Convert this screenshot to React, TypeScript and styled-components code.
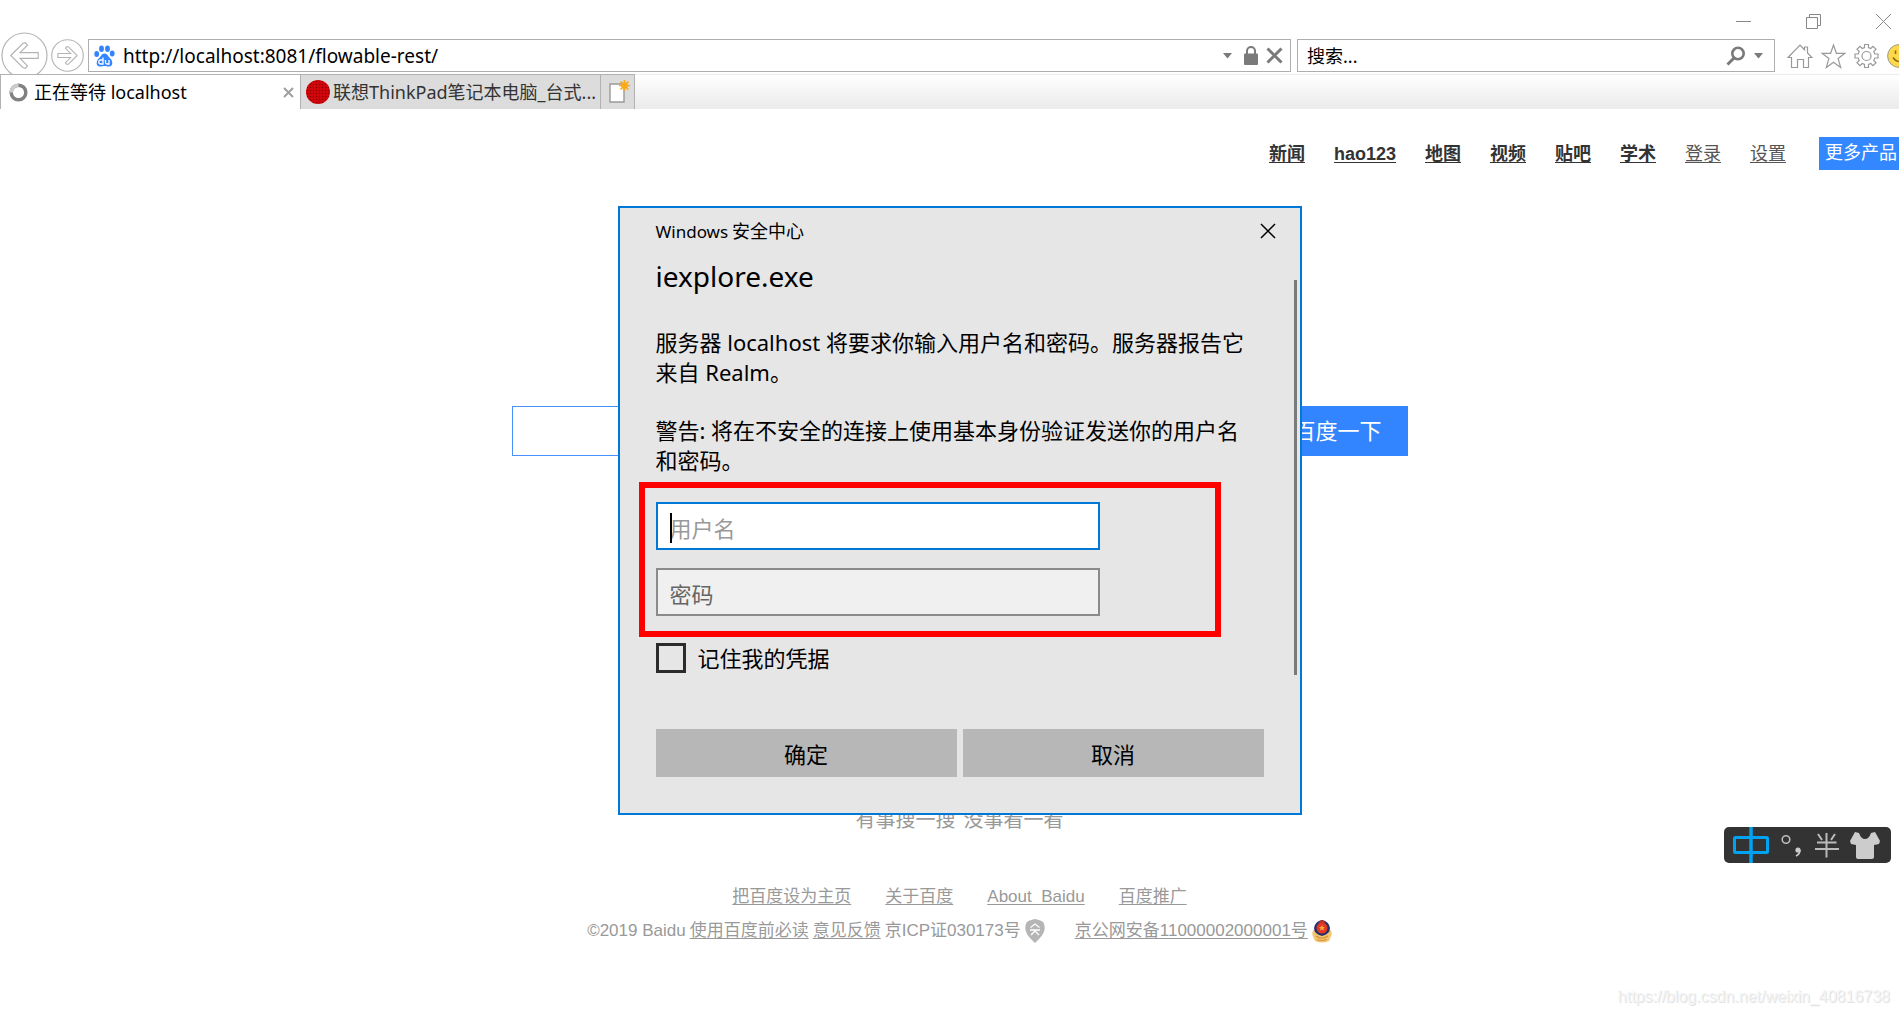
import React from "react";
import styled, { createGlobalStyle, css } from "styled-components";

const ui = `"Noto Sans", "Noto Sans CJK SC", sans-serif`;
const web = `"Liberation Sans", "Noto Sans CJK SC", sans-serif`;

const GlobalStyle = createGlobalStyle`
  *, *::before, *::after { box-sizing: border-box; }
  html, body { margin: 0; height: 100%; overflow: hidden; background: #fff; }
  #root { height: 100%; }
  button, input { font: inherit; color: inherit; margin: 0; }
  svg { display: block; flex: none; }
`;

const Screen = styled.div`
  position: relative;
  display: flex;
  flex-direction: column;
  min-height: 100vh;
  overflow: hidden;
  font-family: ${ui};
  color: #000;
`;

/* ---------- Browser chrome ---------- */

const Plain = styled.button`
  display: flex;
  align-items: center;
  justify-content: center;
  flex: none;
  padding: 0;
  border: 0;
  background: none;
`;

const TitleBar = styled.div`
  display: flex;
  justify-content: flex-end;
  gap: 53px;
  height: 32px;
  padding: 13px 7px 0 0;
  align-items: flex-start;
`;

const NavBar = styled.div`
  display: flex;
  align-items: center;
  height: 42px;
  padding-left: 1px;
  overflow: hidden;
`;

const BackForward = styled.div`
  display: flex;
  align-items: flex-start;
  gap: 3px;
  width: 87px;
  flex: none;
  height: 42px;
`;

const ForwardButton = styled(Plain)`
  margin-top: 7px;
`;

const Box = styled.div`
  display: flex;
  align-items: center;
  height: 33px;
  border: 1px solid #aeaeae;
  background: #fff;
  margin-top: 5px;
`;

const AddressBox = styled(Box)`
  flex: 1;
  padding: 0 7px 0 5px;
  gap: 8px;
  margin-right: 6px;
`;

const SearchBox = styled(Box)`
  width: 478px;
  padding: 0 11px 0 9px;
  gap: 8px;
`;

const AddressIcons = styled.div`
  display: flex;
  align-items: center;
  gap: 8px;
`;

const LockIcon = styled.svg`
  margin-left: 4px;
`;

const BarInput = styled.input<{ $size: number }>`
  flex: 1;
  min-width: 0;
  padding: 0;
  border: 0;
  outline: 0;
  background: none;
  font-size: ${(p) => p.$size}px;
  line-height: 28px;
  &::placeholder { color: #000; opacity: 1; }
`;

const Tools = styled.div`
  display: flex;
  gap: 8px;
  width: 124px;
  flex: none;
  padding-left: 12px;
  margin-top: 5px;
  overflow: hidden;
`;

const TabStrip = styled.div`
  display: flex;
  height: 35px;
  border-top: 1px solid transparent;
  background: linear-gradient(#ffffff, #ececec 90%);
`;

const Tab = styled.div<{ $active?: boolean }>`
  display: flex;
  align-items: center;
  gap: 6px;
  width: 300px;
  height: 35px;
  margin-top: -1px;
  padding: 0 6px 0 8px;
  border: 1px solid #b2b2b2;
  border-width: 1px 0 0 1px;
  background: #fff;
  font-size: 18px;
  line-height: 26px;
  white-space: nowrap;
  ${(p) =>
    !p.$active &&
    css`
      gap: 3px;
      padding: 0 0 0 5px;
      background: #dcdcdc;
      color: #333;
    `}
`;

const TabLabel = styled.span`
  flex: 1;
`;

const NewTab = styled(Plain)`
  width: 35px;
  height: 35px;
  margin-top: -1px;
  padding-left: 3px;
  border: 1px solid #b2b2b2;
  border-bottom: 0;
  background: #dcdcdc;
`;

/* ---------- Search page ---------- */

const Page = styled.main`
  display: flex;
  flex-direction: column;
  align-items: center;
  width: calc(100% + 20px);
  font-family: ${web};
`;

const TopNav = styled.nav`
  display: flex;
  align-items: center;
  align-self: flex-end;
  gap: 29px;
  height: 33px;
  margin: 28px 15px 0 0;
  font-size: 18px;
  line-height: 26px;
`;

const NavLink = styled.a<{ $bold?: boolean }>`
  color: ${(p) => (p.$bold ? "#333" : "#555")};
  font-weight: ${(p) => (p.$bold ? 700 : 400)};
  text-underline-offset: 2px;
`;

const MoreLink = styled.a`
  width: 85px;
  height: 33px;
  margin-left: 4px;
  padding-left: 6px;
  background: #3388ff;
  color: #fff;
  line-height: 32px;
  text-decoration: none;
  white-space: nowrap;
`;

const SearchForm = styled.form`
  display: flex;
  width: 896px;
  height: 50px;
  margin-top: 236px;
`;

const QueryInput = styled.input`
  flex: 1;
  min-width: 0;
  padding: 0 10px;
  border: 1px solid #4791ff;
  outline: 0;
`;

const QueryButton = styled.button`
  width: 140px;
  padding: 0 0 4px;
  border: 0;
  background: #3385ff;
  color: #fff;
  font-size: 22px;
`;

const Slogan = styled.p`
  display: flex;
  gap: 8px;
  margin: 350px 0 0;
  color: #999;
  font-size: 20px;
  line-height: 28px;
`;

const FooterLinks = styled.div`
  display: flex;
  gap: 34px;
  margin-top: 50px;
  font-size: 17px;
  line-height: 26px;
`;

const FooterLink = styled.a`
  color: #999;
  text-underline-offset: 2px;
`;

const Legal = styled.div`
  display: flex;
  align-items: center;
  gap: 4px;
  margin-top: 8px;
  color: #999;
  font-size: 17px;
  line-height: 26px;
`;

const Spacer = styled.span`
  width: 22px;
`;

/* ---------- Credentials dialog ---------- */

const DialogLayer = styled.div`
  position: absolute;
  top: 206px;
  left: 20px;
  right: 0;
  display: flex;
  justify-content: center;
  pointer-events: none;
`;

const Dialog = styled.section`
  position: relative;
  width: 684px;
  padding: 8px 36px 36px;
  border: 2px solid #0078d7;
  background: #e6e6e6;
  pointer-events: auto;
`;

const DialogBar = styled.header`
  display: flex;
  align-items: center;
  justify-content: space-between;
  height: 30px;
  margin-right: -12px;
`;

const Caption = styled.div`
  display: flex;
  align-items: baseline;
  gap: 4px;
  font-size: 18px;
  line-height: 26px;
`;

const AppName = styled.span`
  font-size: 17px;
`;

const DialogTitle = styled.h1`
  margin: 10px 0 0;
  padding-bottom: 3px;
  font-size: 28px;
  font-weight: 400;
  line-height: 40px;
`;

const Message = styled.p`
  margin: 28px 0 0;
  padding-right: 8px;
  font-size: 22px;
  line-height: 30px;
`;

const Fields = styled.div`
  position: relative;
  display: flex;
  flex-direction: column;
  align-items: flex-start;
  gap: 18px;
  margin-top: 27px;
`;

const Highlight = styled.div`
  position: absolute;
  inset: -20px 43px -21px -17px;
  border: 6px solid #f00;
  pointer-events: none;
`;

const FieldWrap = styled.label`
  position: relative;
  width: 444px;
`;

const Caret = styled.span`
  position: absolute;
  left: 14px;
  top: 11px;
  width: 2px;
  height: 30px;
  background: #000;
`;

const Field = styled.input<{ $focused?: boolean }>`
  display: block;
  width: 100%;
  height: 48px;
  padding: 4px 12px 0;
  border: 2px solid ${(p) => (p.$focused ? "#0078d7" : "#8a8a8a")};
  border-radius: 0;
  outline: 0;
  background: ${(p) => (p.$focused ? "#fff" : "#f0f0f0")};
  font-size: 22px;
  &::placeholder { color: ${(p) => (p.$focused ? "#999" : "#666")}; opacity: 1; }
`;

const Remember = styled.label`
  display: flex;
  align-items: center;
  gap: 12px;
  margin-top: 27px;
  font-size: 22px;
  line-height: 30px;
`;

const CheckBox = styled.input`
  appearance: none;
  width: 30px;
  height: 30px;
  border: 3px solid #2b2b2b;
`;

const Actions = styled.div`
  display: flex;
  gap: 6px;
  margin-top: 56px;
`;

const Action = styled.button`
  flex: 1;
  height: 48px;
  padding: 0;
  border: 0;
  background: #b7b7b7;
  font-size: 22px;
`;

const ScrollThumb = styled.div`
  position: absolute;
  top: 72px;
  right: 3px;
  width: 3px;
  height: 395px;
  background: #7a7a7a;
`;

/* ---------- Floating items ---------- */

const ImeBar = styled.div`
  position: absolute;
  right: 8px;
  top: 827px;
  display: flex;
  width: 167px;
  height: 36px;
  border-radius: 5px;
  background: #333;
  overflow: hidden;
`;

const Watermark = styled.div`
  position: absolute;
  right: 9px;
  bottom: 7px;
  color: #f4f4f4;
  font-family: ${web};
  font-size: 16px;
  line-height: 22px;
  text-shadow: 1px 1px 0 #e2e2e2;
`;

/* ---------- Icons ---------- */

const Arrow = ({ size, flip }: { size: number; flip?: boolean }) => (
  <svg width={size} height={size} viewBox="0 0 48 48" fill="none" stroke="#b4b4b4" strokeWidth={flip ? 1.6 : 1.2}>
    <circle cx="24" cy="24" r="23" />
    <path
      transform={flip ? "rotate(180 24 24)" : undefined}
      d="M10 24 22.500 11.500 25 11 27 13.500 19.500 21H38v6H19.500L27 34.500 25 37 22.500 36.500Z"
    />
  </svg>
);

const Paw = () => (
  <svg width="21" height="22" viewBox="0 0 21 22" fill="#3385ff">
    <ellipse cx="2.700" cy="9" rx="2.400" ry="3" />
    <ellipse cx="7.500" cy="3.700" rx="2.400" ry="3.200" />
    <ellipse cx="13.500" cy="3.700" rx="2.400" ry="3.200" />
    <ellipse cx="18.200" cy="8.500" rx="2.400" ry="3" />
    <path d="M10.500 8.500c3 0 3.500 3 5.500 4.700 3 2.500 3.500 8-1 8.300-2 .1-2.500-.5-4.500-.5s-2.500.6-4.500.5c-4.500-.3-4-5.800-1-8.300 2-1.700 2.500-4.700 5.500-4.700Z" />
    <path d="M9 12.500v6.500H6.800a1.900 1.900 0 0 1 0-4H9M11.500 15v2.500q0 1.500 1.500 1.500h2v-4" fill="none" stroke="#fff" strokeWidth="1.300" />
  </svg>
);

const Down = () => (
  <svg width="9" height="6" viewBox="0 0 9 6"><path d="M0 0h9L4.500 5.500Z" fill="#7a7a7a" /></svg>
);

export default function App() {
  return (
    <Screen>
      <GlobalStyle />
      <TitleBar>
        <Plain aria-label="Minimize">
          <svg width="17" height="17" viewBox="0 0 17 17" stroke="#888"><path d="M1 8.500h15" /></svg>
        </Plain>
        <Plain aria-label="Restore">
          <svg width="17" height="17" viewBox="0 0 17 17" fill="none" stroke="#888">
            <path d="M1.500 4.500h11v11h-11ZM4.500 4.500v-3h11v11h-3" />
          </svg>
        </Plain>
        <Plain aria-label="Close">
          <svg width="17" height="17" viewBox="0 0 17 17" stroke="#888"><path d="m1 1 15 15M16 1 1 16" /></svg>
        </Plain>
      </TitleBar>

      <NavBar>
        <BackForward>
          <Plain aria-label="Back"><Arrow size={47} /></Plain>
          <ForwardButton aria-label="Forward"><Arrow size={33} flip /></ForwardButton>
        </BackForward>
        <AddressBox>
          <Paw />
          <BarInput $size={19} aria-label="Address" defaultValue="http://localhost:8081/flowable-rest/" />
          <AddressIcons>
            <Down />
            <LockIcon width="14" height="19" viewBox="0 0 14 19">
              <path d="M3 8V5a4 4 0 0 1 8 0v3" fill="none" stroke="#7a7a7a" strokeWidth="2" />
              <path d="M1 7.500h12q1 0 1 1V18q0 1-1 1H1q-1 0-1-1V8.500q0-1 1-1Z" fill="#7a7a7a" />
            </LockIcon>
            <svg width="17" height="17" viewBox="0 0 17 17" stroke="#7a7a7a" strokeWidth="3"><path d="m1.500 1.500 14 14M15.500 1.500l-14 14" /></svg>
          </AddressIcons>
        </AddressBox>
        <SearchBox>
          <BarInput $size={18} aria-label="Search" placeholder="搜索..." />
          <svg width="20" height="20" viewBox="0 0 20 20" fill="none" stroke="#7a7a7a">
            <circle cx="12" cy="7.500" r="5.700" strokeWidth="2.600" />
            <path d="m8 12-6.500 6.500" strokeWidth="3" />
          </svg>
          <Down />
        </SearchBox>
        <Tools>
          <Plain aria-label="Home">
            <svg width="26" height="26" viewBox="0 0 26 26" fill="none" stroke="#999" strokeWidth="1.200">
              <path d="M1 14.500 13 2l4.500 4.700V4h3v6l4.500 4.500h-3.500V24.500h-5v-8h-6v8h-6v-10Z" />
            </svg>
          </Plain>
          <Plain aria-label="Favorites">
            <svg width="25" height="26" viewBox="0 0 25 26" fill="none" stroke="#999" strokeWidth="1.200">
              <path d="m12.500 2 2.900 8.300H24l-6.900 5.300 2.600 8.900-7.200-5.300-7.200 5.300 2.600-8.900L1 10.300h8.600Z" />
            </svg>
          </Plain>
          <Plain aria-label="Settings">
            <svg width="25" height="26" viewBox="0 0 25 26" fill="none" stroke="#999" strokeWidth="1.200">
              <path d="m10.500 1.500h4v3l2.300 1 2.200-2.200 3 3-2.200 2.200 1 2.500h3.200v4h-3.200l-1 2.500 2.200 2.200-3 3-2.200-2.200-2.300 1v3h-4v-3l-2.300-1L6 22.700l-3-3 2.200-2.200-1-2.500H1v-4h3.200l1-2.500L3 6.300l3-3 2.200 2.200 2.300-1Z" />
              <circle cx="12.500" cy="13" r="4.500" />
            </svg>
          </Plain>
          <Plain aria-label="Feedback">
            <svg width="24" height="26" viewBox="0 0 24 26">
              <circle cx="12" cy="13" r="11.400" fill="#ffd84a" stroke="#999" />
              <path d="M8.500 7.500v3.500M15.500 7.500v3.500M6 14.500q6 8 12 0" fill="none" stroke="#8a6d1c" strokeWidth="1.600" />
            </svg>
          </Plain>
        </Tools>
      </NavBar>

      <TabStrip>
        <Tab $active>
          <svg width="19" height="19" viewBox="0 0 19 19" fill="none" strokeWidth="3.500">
            <circle cx="9.500" cy="9.500" r="7.300" stroke="#808080" />
            <path d="M2.200 9.500A7.300 7.300 0 0 1 9.500 2.200" stroke="#ccc" />
          </svg>
          <TabLabel>正在等待 localhost</TabLabel>
          <Plain aria-label="Close tab">
            <svg width="11" height="11" viewBox="0 0 11 11" stroke="#a0a0a0" strokeWidth="2"><path d="m1 1 9 9M10 1l-9 9" /></svg>
          </Plain>
        </Tab>
        <Tab>
          <svg width="24" height="24" viewBox="0 0 24 24">
            <defs>
              <pattern id="dots" width="3" height="3" patternUnits="userSpaceOnUse">
                <circle cx="1.500" cy="1.500" r=".8" fill="#8e0000" />
              </pattern>
            </defs>
            <circle cx="12" cy="12" r="12" fill="#d3060c" />
            <circle cx="12" cy="12" r="12" fill="url(#dots)" />
          </svg>
          <TabLabel>联想ThinkPad笔记本电脑_台式...</TabLabel>
        </Tab>
        <NewTab aria-label="New tab">
          <svg width="21" height="24" viewBox="0 0 21 24">
            <path d="M1 4h14v18H1Z" fill="#fff" stroke="#999" strokeWidth="1.400" />
            <path d="M15.500 0v11M10 5.500h11M11.500 1.500l8 8M19.500 1.500l-8 8" stroke="#f9a91a" strokeWidth="1.700" />
            <circle cx="15.500" cy="5.500" r="3.200" fill="#f9a91a" />
          </svg>
        </NewTab>
      </TabStrip>

      <Page>
        <TopNav>
          <NavLink $bold href="#">新闻</NavLink>
          <NavLink $bold href="#">hao123</NavLink>
          <NavLink $bold href="#">地图</NavLink>
          <NavLink $bold href="#">视频</NavLink>
          <NavLink $bold href="#">贴吧</NavLink>
          <NavLink $bold href="#">学术</NavLink>
          <NavLink href="#">登录</NavLink>
          <NavLink href="#">设置</NavLink>
          <MoreLink href="#">更多产品</MoreLink>
        </TopNav>
        <SearchForm onSubmit={(e) => e.preventDefault()}>
          <QueryInput aria-label="百度搜索" />
          <QueryButton>百度一下</QueryButton>
        </SearchForm>
        <Slogan><span>有事搜一搜</span><span>没事看一看</span></Slogan>
        <FooterLinks>
          <FooterLink href="#">把百度设为主页</FooterLink>
          <FooterLink href="#">关于百度</FooterLink>
          <FooterLink href="#">About&nbsp; Baidu</FooterLink>
          <FooterLink href="#">百度推广</FooterLink>
        </FooterLinks>
        <Legal>
          <span>©2019 Baidu</span>
          <FooterLink href="#">使用百度前必读</FooterLink>
          <FooterLink href="#">意见反馈</FooterLink>
          <span>京ICP证030173号</span>
          <svg width="20" height="24" viewBox="0 0 20 24">
            <path d="M10 0c3 1 6 1 8.500 3.500 3 7 .5 12.500-8.500 20.500C1 16-1.500 10.500 1.500 3.500 4 1 7 1 10 0Z" fill="#b5b5b5" />
            <path d="M5.500 8.500 10 5l4.500 3.500M5 11h10M6 16l4-4 4 4" fill="none" stroke="#fff" strokeWidth="1.300" />
          </svg>
          <Spacer />
          <FooterLink href="#">京公网安备11000002000001号</FooterLink>
          <svg width="20" height="24" viewBox="0 0 20 24">
            <path d="M1.500 11q-2 3-.8 5.500L3 22q7 3 14 0l2.300-5.500q1.200-2.500-.8-5.500Z" fill="#f3c772" />
            <path d="M10 1q7 1.500 8 8 0 6-8 8Q2 15 2 9 3 2.500 10 1Z" fill="#27306e" />
            <path d="M10 1q2.500 0 3.500 2.500L10 5 6.500 3.500Q7.500 1 10 1Z" fill="#b8332a" />
            <circle cx="10" cy="9" r="5.500" fill="#e23a22" />
            <path d="m10 6 1 2h2l-1.500 1.500.5 2-2-1-2 1 .5-2L7 8h2Z" fill="#f7a23a" />
            <path d="M4 17q6 4.500 12 0M5 20.500q5 2 10 0" fill="none" stroke="#d9903a" strokeWidth="1.200" />
          </svg>
        </Legal>
      </Page>

      <DialogLayer>
        <Dialog role="dialog" aria-labelledby="dialog-title">
          <DialogBar>
            <Caption><AppName>Windows</AppName><span>安全中心</span></Caption>
            <Plain aria-label="关闭">
              <svg width="16" height="16" viewBox="0 0 16 16" stroke="#000" strokeWidth="1.500"><path d="m1 1 14 14M15 1 1 15" /></svg>
            </Plain>
          </DialogBar>
          <DialogTitle id="dialog-title">iexplore.exe</DialogTitle>
          <Message>服务器 localhost 将要求你输入用户名和密码。服务器报告它来自 Realm。</Message>
          <Message>警告: 将在不安全的连接上使用基本身份验证发送你的用户名和密码。</Message>
          <Fields>
            <FieldWrap>
              <Field $focused aria-label="用户名" placeholder="用户名" />
              <Caret />
            </FieldWrap>
            <FieldWrap>
              <Field type="password" aria-label="密码" placeholder="密码" />
            </FieldWrap>
            <Highlight />
          </Fields>
          <Remember><CheckBox type="checkbox" />记住我的凭据</Remember>
          <Actions>
            <Action>确定</Action>
            <Action>取消</Action>
          </Actions>
          <ScrollThumb />
        </Dialog>
      </DialogLayer>

      <ImeBar>
        <svg width="167" height="36" viewBox="0 0 167 36" fill="none">
          <rect x="10.500" y="10.500" width="33" height="15" rx="1" stroke="#00a2f2" strokeWidth="3" />
          <path d="M27 0v36" stroke="#00a2f2" strokeWidth="3.500" />
          <circle cx="62" cy="12.500" r="3.800" stroke="#bbb" strokeWidth="1.600" />
          <circle cx="74" cy="23" r="2.600" fill="#ccc" />
          <path d="M76 23q0 4-4 6" stroke="#ccc" strokeWidth="1.600" />
          <path d="M102.500 6v24.500M91 22h24M93 15.500h19.500M94 7l4 6M111 7l-4 6" stroke="#bbb" strokeWidth="2" />
          <path d="m131 5 4 1q2 6 6 6t6-6l4-1 5 9-1 3-5 1v12q0 2-2 2h-14q-2 0-2-2V18l-5-1-1-3Z" fill="#ccc" />
        </svg>
      </ImeBar>
      <Watermark>https://blog.csdn.net/weixin_40816738</Watermark>
    </Screen>
  );
}
